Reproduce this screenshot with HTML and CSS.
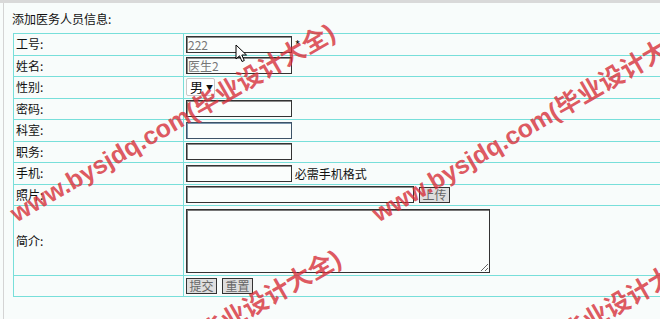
FILE: index.html
```html
<!DOCTYPE html>
<html lang="zh">
<head>
<meta charset="utf-8">
<title>添加医务人员信息</title>
<link rel="stylesheet" href="styles.css">
</head>
<body>
<div class="topbar"></div>
<div class="frame">
  <div class="heading">添加医务人员信息:</div>
  <table class="form">
    <tr class="row"><td class="label">工号:</td><td class="field"><input class="txt" type="text" value="222"> <span class="star">*</span></td></tr>
    <tr class="row"><td class="label">姓名:</td><td class="field"><input class="txt" type="text" value="医生2"></td></tr>
    <tr class="row"><td class="label">性别:</td><td class="field"><span class="select">男<span class="caret">▼</span></span></td></tr>
    <tr class="row"><td class="label">密码:</td><td class="field"><input class="txt" type="password"></td></tr>
    <tr class="row"><td class="label">科室:</td><td class="field"><input class="txt blue" type="text"></td></tr>
    <tr class="row"><td class="label">职务:</td><td class="field"><input class="txt" type="text"></td></tr>
    <tr class="row"><td class="label">手机:</td><td class="field"><input class="txt" type="text"> <span class="note">必需手机格式</span></td></tr>
    <tr class="row"><td class="label">照片:</td><td class="field"><input class="txt wide" type="text"><button class="btn upload" type="button">上传</button></td></tr>
    <tr class="tall"><td class="label">简介:</td><td class="field"><textarea class="area"></textarea></td></tr>
    <tr class="btnrow"><td class="label"></td><td class="field"><button class="btn" type="button">提交</button><button class="btn reset" type="button">重置</button></td></tr>
  </table>
</div>

<svg class="cursor" width="13" height="19" viewBox="0 0 13 19"><path d="M1 1 L1 15 L4.5 11.8 L7 17.5 L9.3 16.5 L6.8 11 L11.5 11 Z" fill="#fff" stroke="#000" stroke-width="1" stroke-linejoin="round"/></svg>

<div class="wm wm1">www.bysjdq.com(毕业设计大全)</div>
<div class="wm wm2">www.bysjdq.com(毕业设计大全)</div>
<div class="wm wm3">www.bysjdq.com(毕业设计大全)</div>
<div class="wm wm4">www.bysjdq.com(毕业设计大全)</div>
</body>
</html>
```
FILE: styles.css
```css
html, body {
  margin: 0;
  padding: 0;
  background: #f8fcfb;
  overflow: hidden;
  width: 660px;
  height: 319px;
  font-family: "Noto Sans CJK SC", "Liberation Sans", sans-serif;
  font-size: 12px;
  color: #111;
  position: relative;
}
.topbar {
  height: 3px;
  background: #d9d9d9;
}
.frame {
  margin-left: 3px;
  border-left: 1px solid #d4d4d4;
  padding-left: 8px;
  height: 316px;
}
.heading {
  padding-top: 9px;
  line-height: 14px;
  height: 14px;
  margin-bottom: 7px;
}
.form {
  border-collapse: collapse;
  width: 720px;
  margin-left: 1px;
}
.form td {
  border: 1px solid #78dfda;
  padding: 0 2px;
  vertical-align: middle;
  line-height: 14px;
}
.form .label {
  width: 165px;
}
.row td { height: 20.5px; }
.tall td { height: 69px; }
.btnrow td { height: 20px; }
.txt {
  box-sizing: border-box;
  width: 106px;
  height: 17px;
  margin: 0;
  padding: 0 1px;
  border: 1px solid #333;
  box-shadow: inset 1px 1px 0 #8a8a8a;
  background: #fafdfc;
  font-family: "Noto Sans CJK SC", "Liberation Sans", sans-serif;
  font-size: 12px;
  color: #777;
  vertical-align: middle;
}
.txt.blue {
  border-color: #3d5368;
  box-shadow: inset 1px 1px 0 #7a96ad;
}
.txt.wide { width: 228px; }
.star, .note {
  vertical-align: middle;
  color: #111;
}
.select {
  display: inline-flex;
  align-items: center;
  box-sizing: border-box;
  height: 18px;
  width: 29px;
  padding-left: 3px;
  border: 1px solid #c8c8c8;
  border-radius: 2px;
  background: #fff;
  font-size: 13px;
  vertical-align: middle;
}
.caret {
  font-size: 7px;
  margin-left: 3px;
  color: #111;
}
.btn {
  box-sizing: border-box;
  width: 31px;
  height: 16px;
  margin: 0;
  padding: 0;
  border: 1px solid #333;
  background: #dedede;
  color: #666;
  font-family: "Noto Sans CJK SC", sans-serif;
  font-size: 12px;
  line-height: 14px;
  vertical-align: middle;
}
.upload { margin-left: 5px; }
.reset { margin-left: 5px; }
.area {
  display: block;
  box-sizing: border-box;
  width: 304px;
  height: 64px;
  margin: 0;
  border: 1px solid #333;
  box-shadow: inset 1px 1px 0 #777;
  background: #fafdfc;
}
.cursor {
  position: absolute;
  left: 235px;
  top: 44px;
}
.wm {
  position: absolute;
  white-space: nowrap;
  font-family: "Liberation Sans", "Noto Sans CJK SC", sans-serif;
  font-size: 25px;
  font-weight: 700;
  color: rgba(214, 45, 55, 0.8);
  transform: rotate(-30deg);
  transform-origin: 0 50%;
  pointer-events: none;
  line-height: 30px;
}
.wm1 { left: 12px; top: 200px; }
.wm2 { left: 374px; top: 200px; }
.wm3 { left: 18px; top: 426px; }
.wm4 { left: 380px; top: 426px; }
```
